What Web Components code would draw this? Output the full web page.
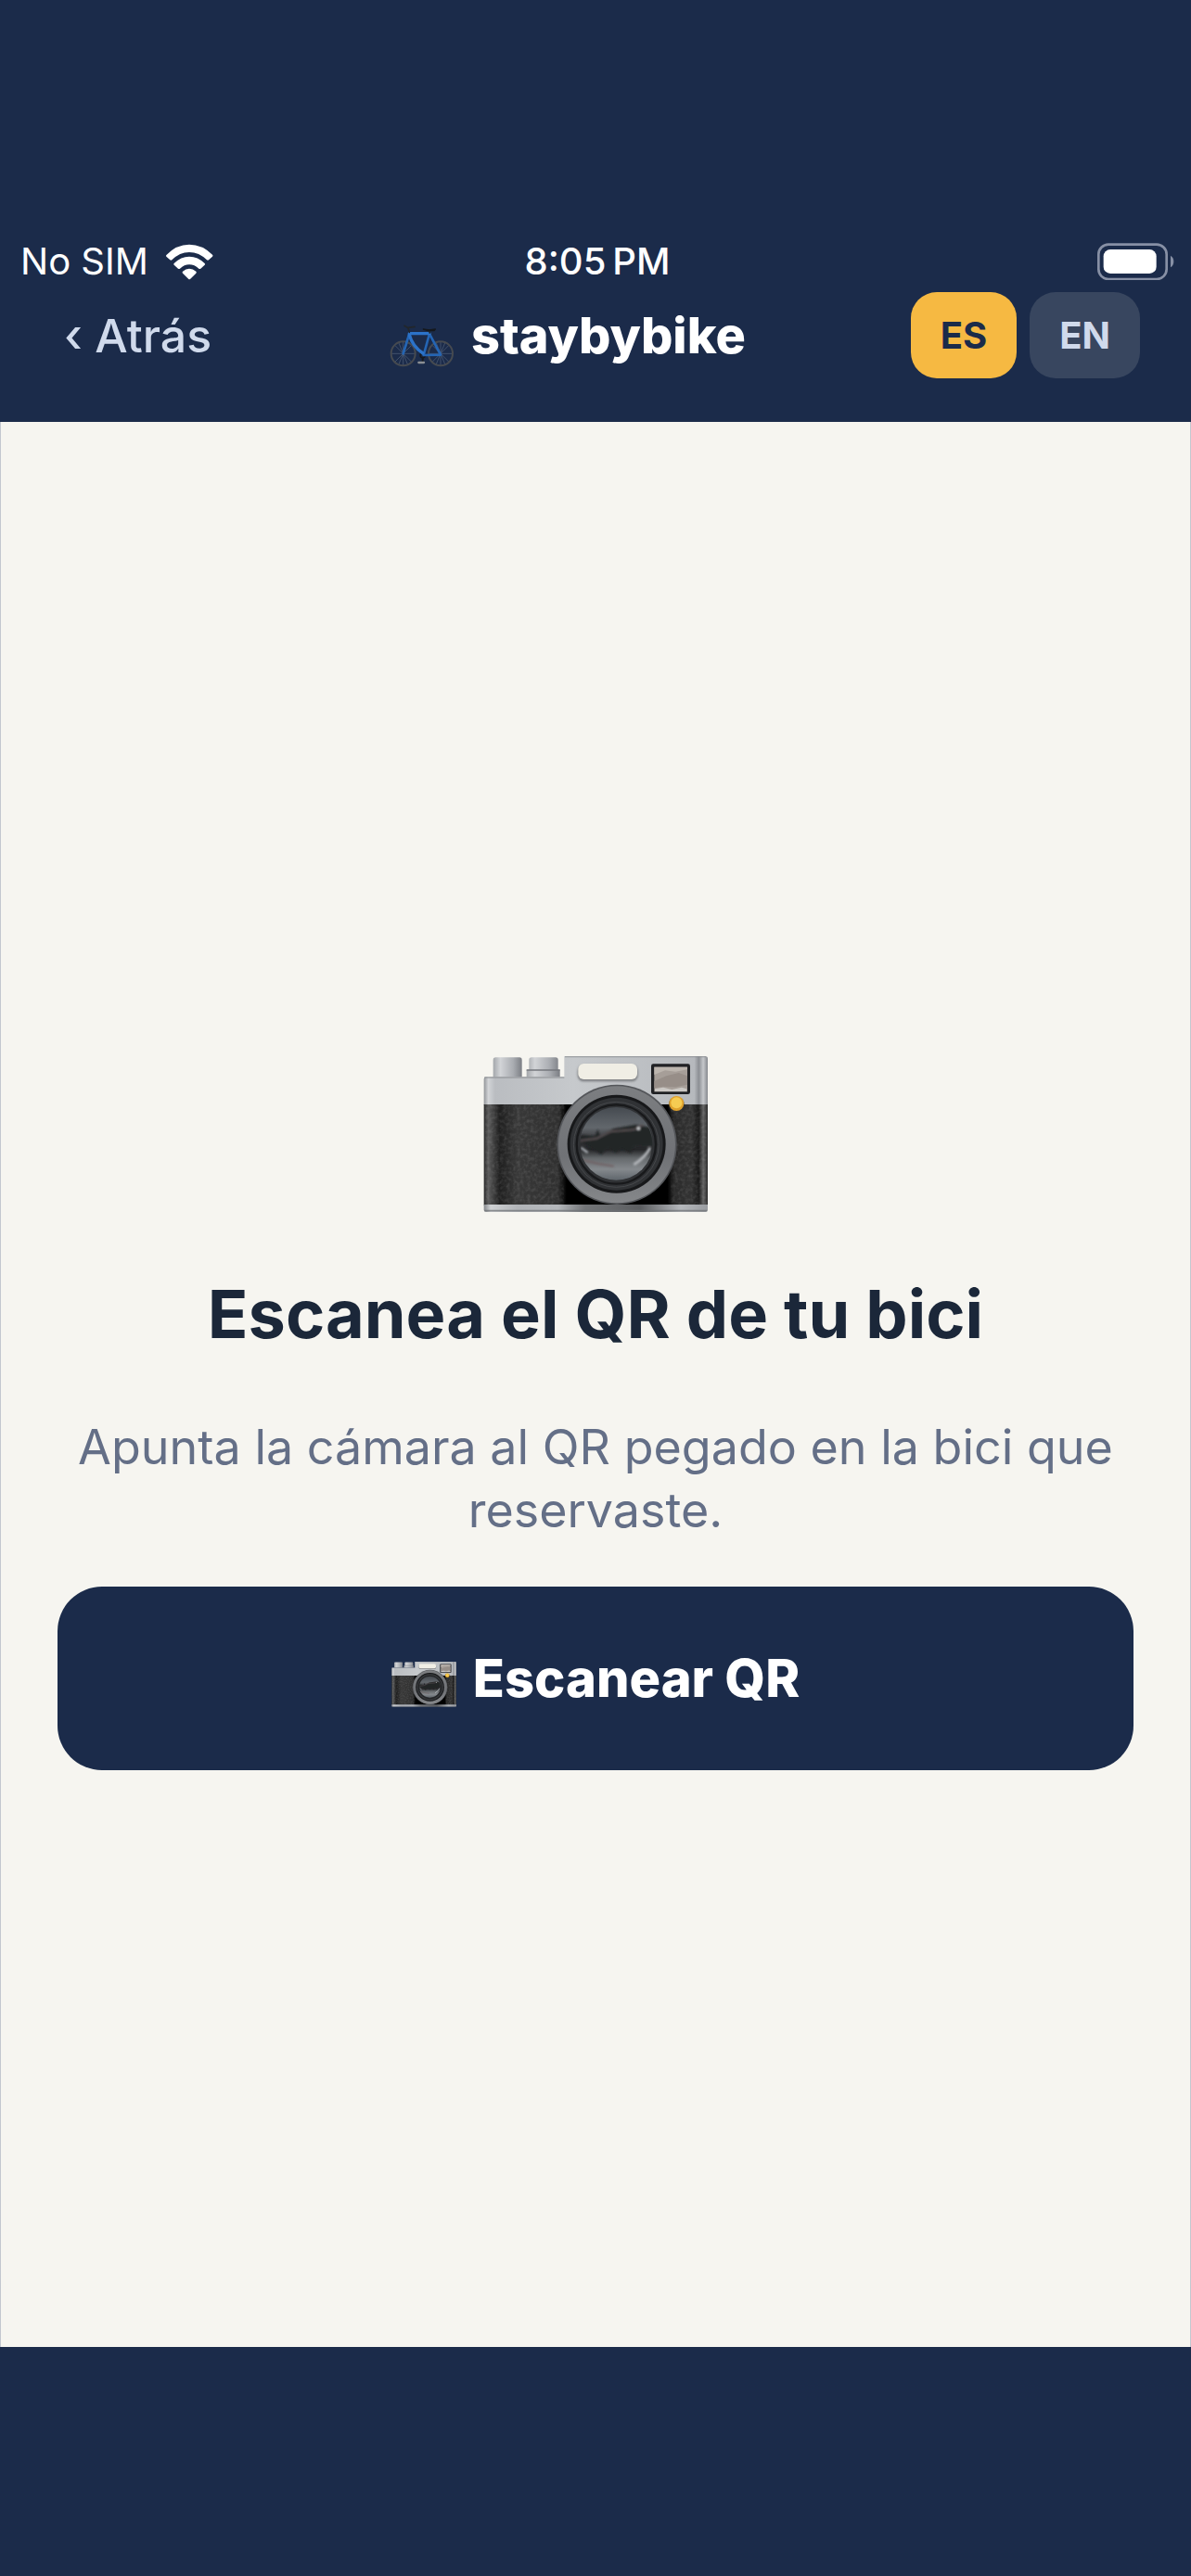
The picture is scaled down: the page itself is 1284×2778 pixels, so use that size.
<!DOCTYPE html>
<html lang="es">
<head>
<meta charset="utf-8">
<meta name="viewport" content="width=device-width, initial-scale=1">
<title>staybybike</title>
<style>
    body {
        margin: 0;
        background: #1b2b4a;
        font-family: Inter, "Liberation Sans", sans-serif;
    }
</style>
</head>
<body>
<sbb-app>
    <sbb-status slot="top" carrier="No SIM" time="8:05&#8239;PM"></sbb-status>
    <sbb-nav slot="top">
        <span slot="back">‹ Atrás</span>
        <span slot="brand">staybybike</span>
        <sbb-lang slot="lang" current="ES"></sbb-lang>
    </sbb-nav>
    <sbb-scan>
        <span slot="title">Escanea el QR de tu bici</span>
        <span slot="text">Apunta la cámara al QR pegado en la bici que reservaste.</span>
        <span slot="action">Escanear QR</span>
    </sbb-scan>
</sbb-app>

<script>
class App extends HTMLElement {
    constructor() {
        super();
        this.shadow = this.attachShadow( { mode: 'open' } );
    }

    connectedCallback() {
        this.shadow.innerHTML = `
            <style>
                :host {
                    display: flex;
                    flex-direction: column;
                    min-height: 100vh;
                    box-sizing: border-box;
                    padding-bottom: 247px;
                    background: #1b2b4a;
                }

                header {
                    padding-top: 257px;
                }

                main {
                    flex: 1;
                    display: flex;
                    flex-direction: column;
                    justify-content: center;
                    padding: 0 61px;
                    background: #f6f5f0;
                    border: solid #c3c7cf;
                    border-width: 0 1px;
                }
            </style>
            <header><slot name="top"></slot></header>
            <main><slot></slot></main>
        `;
    }
}

class Status extends HTMLElement {
    constructor() {
        super();
        this.shadow = this.attachShadow( { mode: 'open' } );
    }

    connectedCallback() {
        this.shadow.innerHTML = `
            <style>
                :host {
                    display: grid;
                    grid-template-columns: 1fr auto 1fr;
                    align-items: center;
                    height: 50px;
                    padding: 0 18px 0 22px;
                    color: #fff;
                    font-size: 40px;
                    line-height: 50px;
                }

                .left {
                    display: flex;
                    align-items: center;
                    gap: 18px;
                }

                .time {
                    font-weight: 500;
                }

                .battery {
                    justify-self: end;
                }

                svg {
                    display: block;
                }
            </style>
            <div class="left">
                <span>${this.getAttribute( 'carrier' )}</span>
                <svg width="52" height="39" viewBox="530 66 156 117" fill="#fff">
                    <path d="M535 101 Q567 68 608 68 Q650 68 683 101 Q686 104 683 107 L671 118 Q668 120 665 118 Q640 93 608 93 Q577 93 552 118 Q549 120 546 118 L534 107 Q531 104 535 101Z"/>
                    <path d="M559 129 Q581 107 608 107 Q636 107 658 129 Q661 132 658 134 L645 146 Q642 148 639 146 Q625 133 608 133 Q592 133 578 146 Q575 148 572 146 L559 134 Q556 132 559 129Z"/>
                    <path d="M587 155 Q597 146 608 146 Q620 146 630 155 Q633 158 630 161 L611 180 Q608 182 606 180 L587 161 Q584 158 587 155Z"/>
                </svg>
            </div>
            <span class="time">${this.getAttribute( 'time' )}</span>
            <svg class="battery" width="83" height="40" viewBox="849 61 249 120">
                <rect x="853" y="66" width="220" height="112" rx="32" fill="none" stroke="#8790a5" stroke-width="8"/>
                <rect x="869" y="82" width="171" height="78" rx="22" fill="#fff"/>
                <path d="M1086 102 Q1096 108 1096 121 Q1096 134 1086 140Z" fill="#8790a5"/>
            </svg>
        `;
    }
}

class Nav extends HTMLElement {
    constructor() {
        super();
        this.shadow = this.attachShadow( { mode: 'open' } );
    }

    connectedCallback() {
        this.shadow.innerHTML = `
            <style>
                :host {
                    display: flex;
                    align-items: center;
                    justify-content: space-between;
                    padding: 8px 55px 47px;
                }

                button {
                    border: 0;
                    background: none;
                    padding: 0 14px;
                    color: #d0daec;
                    font: 500 50px/60px Inter, "Liberation Sans", sans-serif;
                }

                .brand {
                    display: flex;
                    align-items: center;
                    gap: 18px;
                    color: #fff;
                    font-size: 54px;
                    font-weight: 800;
                    line-height: 60px;
                }

                svg {
                    display: block;
                    margin-top: 22px;
                }
            </style>
            <button type="button"><slot name="back"></slot></button>
            <div class="brand">
                <svg width="70" height="48" viewBox="72 326 210 144" fill="none" stroke-linecap="round" stroke-linejoin="round">
                    <g stroke="#55647c" stroke-width="2">
                        <path d="M116 386V460M79 423H153M90 397L142 449M142 397L90 449M102 389L130 457M130 389L102 457"/>
                        <path d="M237 386V460M200 423H274M211 397L263 449M263 397L211 449M223 389L251 457M251 389L223 457"/>
                    </g>
                    <g stroke="#464a50" stroke-width="6">
                        <circle cx="116" cy="423" r="39"/>
                        <circle cx="237" cy="423" r="39"/>
                    </g>
                    <path d="M179 431V447" stroke="#15181c" stroke-width="6"/>
                    <path d="M166 452H183" stroke="#8b8f94" stroke-width="7"/>
                    <circle cx="179" cy="429" r="8" fill="#1a2438" stroke="#15181c" stroke-width="4"/>
                    <path d="M136 358L116 423M201 359L237 427L182 428L201 359" stroke="#2465b4" stroke-width="8"/>
                    <path d="M136 358H201M136 362Q146 400 180 422" stroke="#2c73c9" stroke-width="10"/>
                    <path d="M136 354L132 340L120 333M132 339L153 336M202 356L200 348" stroke="#22262b" stroke-width="5"/>
                    <path d="M181 344Q200 349 220 344L216 349H196Z" fill="#15181c" stroke="#15181c" stroke-width="4"/>
                </svg>
                <slot name="brand"></slot>
            </div>
            <slot name="lang"></slot>
        `;
    }
}

class Lang extends HTMLElement {
    constructor() {
        super();
        this.shadow = this.attachShadow( { mode: 'open' } );
    }

    connectedCallback() {
        const current = this.getAttribute( 'current' );
        const buttons = [ 'ES', 'EN' ].map( code => `
            <button type="button" aria-pressed="${code === current}">${code}</button>
        ` ).join( '' );

        this.shadow.innerHTML = `
            <style>
                :host {
                    display: flex;
                    gap: 14px;
                }

                button {
                    border: 0;
                    border-radius: 28px;
                    padding: 0 32px;
                    background: #38465f;
                    color: #d0daec;
                    font: 700 40px/93px Inter, "Liberation Sans", sans-serif;
                }

                    button[aria-pressed="true"] {
                        background: #f6b942;
                        color: #1b2b4a;
                    }
            </style>
            ${buttons}
        `;
    }
}

class Camera extends HTMLElement {
    constructor() {
        super();
        this.shadow = this.attachShadow( { mode: 'open' } );
    }

    connectedCallback() {
        this.shadow.innerHTML = `
            <style>
                :host {
                    display: block;
                    width: 242px;
                }

                svg {
                    display: block;
                    width: 100%;
                }
            </style>
            <svg viewBox="58 84 726 504" aria-hidden="true">
                <defs>
                    <linearGradient id="metal" x1="0" x2="1" y1="0" y2="0">
                        <stop offset="0" stop-color="#929599"/>
                        <stop offset=".02" stop-color="#d2d4d7"/>
                        <stop offset=".05" stop-color="#babdc1"/>
                        <stop offset=".4" stop-color="#c6c9cc"/>
                        <stop offset=".94" stop-color="#b6b9bd"/>
                        <stop offset=".96" stop-color="#8c8f94"/>
                        <stop offset=".98" stop-color="#c6c8cb"/>
                        <stop offset="1" stop-color="#85888d"/>
                    </linearGradient>
                    <linearGradient id="knob" x1="0" x2="1" y1="0" y2="0">
                        <stop offset="0" stop-color="#a4a7ab"/>
                        <stop offset=".25" stop-color="#d2d4d7"/>
                        <stop offset=".7" stop-color="#a9acb1"/>
                        <stop offset="1" stop-color="#7b7e84"/>
                    </linearGradient>
                    <linearGradient id="leather" x1="0" x2="1" y1="0" y2="0">
                        <stop offset="0" stop-color="#2b2b2b"/>
                        <stop offset=".02" stop-color="#5b5b5b"/>
                        <stop offset=".07" stop-color="#1f1f1f"/>
                        <stop offset=".15" stop-color="#383838"/>
                        <stop offset=".33" stop-color="#303030"/>
                        <stop offset=".37" stop-color="#000"/>
                        <stop offset=".82" stop-color="#000"/>
                        <stop offset=".85" stop-color="#2a2a2a"/>
                        <stop offset=".93" stop-color="#333"/>
                        <stop offset=".96" stop-color="#181818"/>
                        <stop offset=".98" stop-color="#626262"/>
                        <stop offset="1" stop-color="#2b2b2b"/>
                    </linearGradient>
                    <linearGradient id="base" x1="0" x2="1" y1="0" y2="0">
                        <stop offset="0" stop-color="#85888c"/>
                        <stop offset=".03" stop-color="#d0d2d4"/>
                        <stop offset=".15" stop-color="#b1b4b8"/>
                        <stop offset=".33" stop-color="#b5b8bc"/>
                        <stop offset=".45" stop-color="#737578"/>
                        <stop offset=".7" stop-color="#5b5d60"/>
                        <stop offset=".88" stop-color="#b5b8bc"/>
                        <stop offset="1" stop-color="#999ca0"/>
                    </linearGradient>
                    <linearGradient id="ring" x1="0" x2="0" y1="0" y2="1">
                        <stop offset="0" stop-color="#7c7e81"/>
                        <stop offset=".6" stop-color="#707276"/>
                        <stop offset="1" stop-color="#85878a"/>
                    </linearGradient>
                    <linearGradient id="glass" x1="0" x2="0" y1="0" y2="1">
                        <stop offset="0" stop-color="#454a50"/>
                        <stop offset=".28" stop-color="#62676c"/>
                        <stop offset=".42" stop-color="#3b3c3f"/>
                        <stop offset=".58" stop-color="#242527"/>
                        <stop offset=".7" stop-color="#65696c"/>
                        <stop offset=".85" stop-color="#85898d"/>
                        <stop offset="1" stop-color="#5f666c"/>
                    </linearGradient>
                    <filter id="grain" x="0" y="0" width="1" height="1">
                        <feTurbulence type="fractalNoise" baseFrequency=".09" numOctaves="2" seed="4"/>
                        <feColorMatrix values="0 0 0 0 1  0 0 0 0 1  0 0 0 0 1  .9 0 0 0 -.35"/>
                        <feComposite in2="SourceGraphic" operator="in"/>
                    </filter>
                    <filter id="soft"><feGaussianBlur stdDeviation="3"/></filter>
                    <clipPath id="lens"><circle cx="488" cy="367" r="117"/></clipPath>
                </defs>

                <!-- dials -->
                <path d="M90 152V96Q90 88 98 88H175Q183 88 183 96V152Z" fill="url(#knob)"/>
                <path d="M198 152V128H206V96Q206 88 214 88H292Q300 88 300 96V128H306V152Z" fill="url(#knob)"/>
                <path d="M198 129H306" stroke="#74777c" stroke-width="4"/>

                <!-- body -->
                <path d="M60 242V158Q60 151 67 151H320V84H776Q784 84 784 92V242Z" fill="url(#metal)"/>
                <path d="M62 153H320M322 86H778" stroke="#8c8f93" stroke-width="4" opacity=".7"/>
                <rect x="60" y="240" width="724" height="326" fill="url(#leather)"/>
                <path d="M64 240H320V564H64ZM664 240H780V564H664Z" fill="#fff" filter="url(#grain)" opacity=".25"/>
                <path d="M60 564H784V580Q784 588 776 588H68Q60 588 60 580Z" fill="url(#base)"/>
                <path d="M62 584H782" stroke="#6c6f73" stroke-width="5" opacity=".7"/>

                <!-- flash and viewfinder -->
                <rect x="363" y="112" width="195" height="54" rx="20" fill="#7f8184" filter="url(#soft)"/>
                <rect x="365" y="108" width="191" height="51" rx="18" fill="#f0eee5"/>
                <rect x="601" y="109" width="126" height="98" rx="7" fill="#202124"/>
                <rect x="611" y="119" width="107" height="80" fill="#a69e98"/>
                <path d="M611 119H718V127L680 134L646 130L611 144Z" fill="#bcb5ae"/>
                <path d="M611 165L650 148L690 138L718 148V176L680 184L640 182L611 187Z" fill="#978e88"/>
                <path d="M613 190L640 185L668 192L700 185L716 190V198H613Z" fill="#cbc8c4"/>

                <!-- lens -->
                <circle cx="490" cy="370" r="194" fill="#54565a"/>
                <circle cx="490" cy="370" r="189" fill="url(#ring)"/>
                <circle cx="489" cy="368" r="159" fill="#17181a"/>
                <circle cx="489" cy="368" r="150" fill="#303235"/>
                <circle cx="488" cy="370" r="138" fill="none" stroke="#46484b" stroke-width="3"/>
                <circle cx="488" cy="369" r="128" fill="none" stroke="#18191b" stroke-width="7"/>
                <circle cx="488" cy="367" r="118" fill="url(#glass)"/>
                <g clip-path="url(#lens)" filter="url(#soft)">
                    <path d="M370 338L420 343L428 320L436 342L480 318L550 306L606 315V373L545 376L535 398L505 382L488 397L460 380L440 402L410 382L370 360Z" fill="#242527"/>
                    <path d="M372 357L425 350L470 328L545 322L575 306" fill="none" stroke="#544e50" stroke-width="6"/>
                    <path d="M378 420Q430 433 480 440" fill="none" stroke="#716568" stroke-width="7"/>
                    <path d="M545 435Q584 410 598 380" fill="none" stroke="#b2b5b9" stroke-width="9"/>
                    <path d="M374 380L396 396" stroke="#aeb3b9" stroke-width="7"/>
                    <circle cx="560" cy="318" r="5" fill="#d8dbde"/>
                </g>

                <circle cx="683" cy="241" r="26" fill="#333" opacity=".6"/>
                <circle cx="683" cy="237" r="24" fill="#dfa22d"/>
                <circle cx="683" cy="235" r="18" fill="#f6cc52"/>
            </svg>
        `;
    }
}

class Scan extends HTMLElement {
    constructor() {
        super();
        this.shadow = this.attachShadow( { mode: 'open' } );
    }

    connectedCallback() {
        this.shadow.innerHTML = `
            <style>
                :host {
                    display: flex;
                    flex-direction: column;
                    align-items: center;
                    padding-top: 61px;
                    text-align: center;
                }

                h1 {
                    margin: 66px 0;
                    color: #1b2739;
                    font-size: 72px;
                    font-weight: 700;
                    line-height: 88px;
                }

                p {
                    margin: 0 0 48px;
                    color: #646f87;
                    font-size: 52px;
                    line-height: 68px;
                }

                button {
                    display: flex;
                    align-items: center;
                    justify-content: center;
                    gap: 18px;
                    width: 100%;
                    border: 0;
                    border-radius: 48px;
                    padding: 64px 24px;
                    background: #1b2b4a;
                    color: #fff;
                    font: 800 56px/70px Inter, "Liberation Sans", sans-serif;
                }

                    button sbb-camera {
                        width: 70px;
                        margin-top: 14px;
                    }
            </style>
            <sbb-camera></sbb-camera>
            <h1><slot name="title"></slot></h1>
            <p><slot name="text"></slot></p>
            <button type="button">
                <sbb-camera></sbb-camera>
                <slot name="action"></slot>
            </button>
        `;
    }
}

customElements.define( 'sbb-app', App );
customElements.define( 'sbb-status', Status );
customElements.define( 'sbb-nav', Nav );
customElements.define( 'sbb-lang', Lang );
customElements.define( 'sbb-camera', Camera );
customElements.define( 'sbb-scan', Scan );
</script>
</body>
</html>
